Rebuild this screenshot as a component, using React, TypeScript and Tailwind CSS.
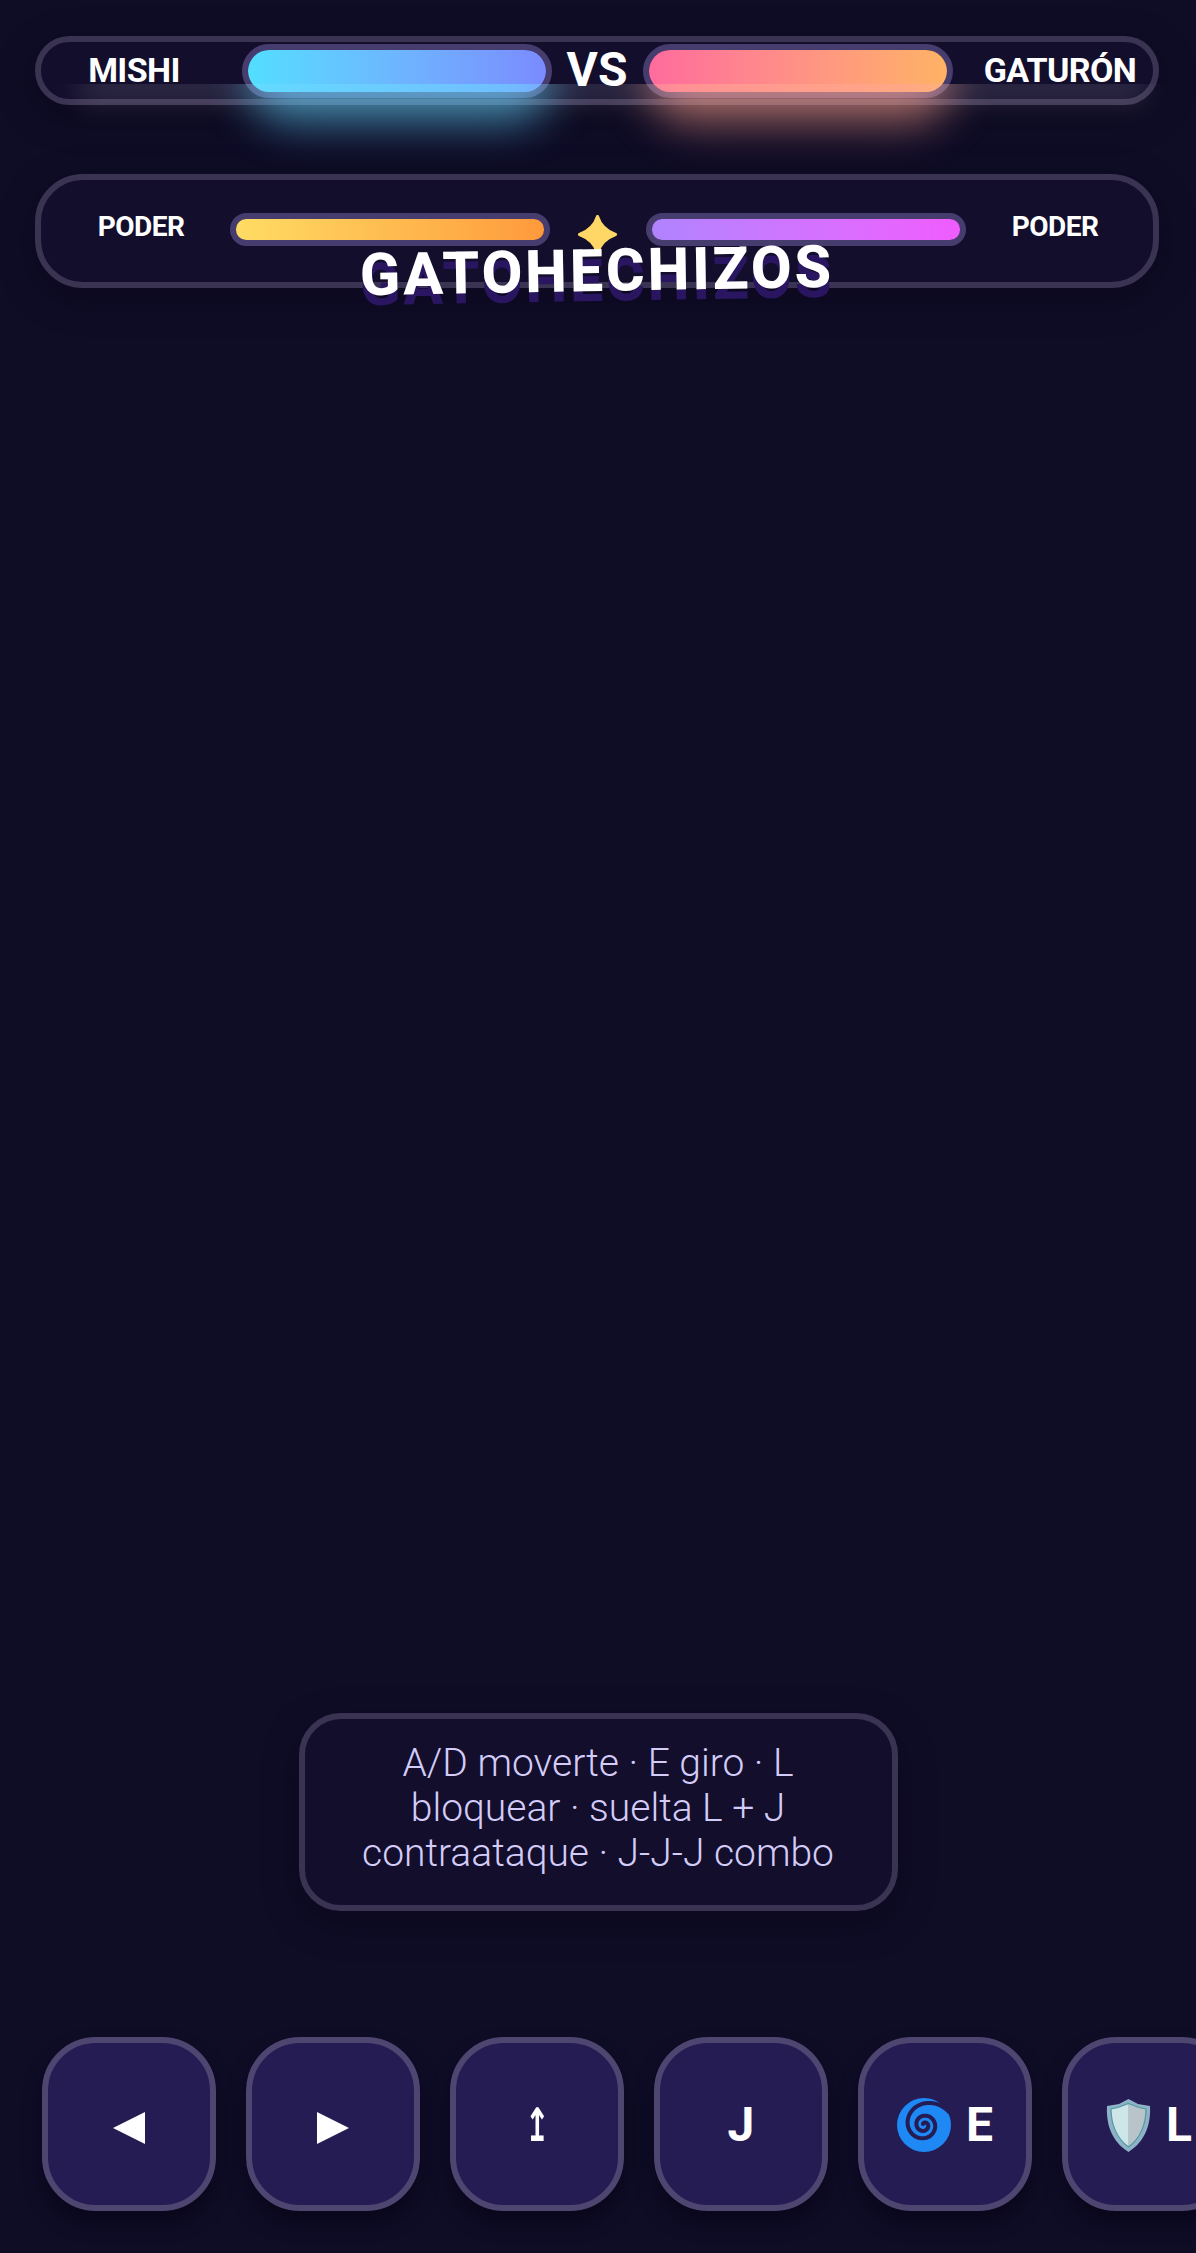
const font = { fontFamily: "Roboto, sans-serif" };

function spiralGap() {
  // dark gap between the arms of the cyclone, from the tail inwards
  const pts: string[] = [];
  for (let i = 0; i <= 120; i++) {
    const t = i / 120;
    const a = -0.45 - t * Math.PI * 4.6;
    const r = 1.5 + 16 * (1 - t) + 11 * Math.pow(1 - t, 9);
    pts.push(`${(27 + r * Math.cos(a)).toFixed(2)} ${(27 + r * Math.sin(a)).toFixed(2)}`);
  }
  return "M" + pts.join("L");
}

function Swirl() {
  return (
    <svg width="54" height="54" viewBox="0 0 54 54" className="shrink-0">
      <circle cx="27" cy="27" r="27" fill="#1e88f5" />
      <path d={spiralGap()} fill="none" stroke="#241c52" strokeWidth="4" strokeLinecap="round" />
    </svg>
  );
}

function Shield() {
  return (
    <svg width="45" height="53" viewBox="0 0 45 53" className="shrink-0">
      <path d="M22.5 0 L32 5 L44 7 C45 24 40 42 22.5 53 C5 42 0 24 1 7 L13 5 Z" fill="#8fb3c6" />
      <path d="M22.5 4.5 L12 8.5 L5 10 C5 24 10 39 22.5 48 Z" fill="#cfe6e8" />
      <path d="M22.5 4.5 L33 8.5 L40 10 C40 24 35 39 22.5 48 Z" fill="#b8c4ca" />
      <path d="M22.5 4.5 L33 8.5 L40 10 C40 24 35 39 22.5 48 C10 39 5 24 5 10 L12 8.5 Z" fill="none" stroke="#4f9aa3" strokeWidth="1.2" />
    </svg>
  );
}

function HealthBar({ fill }: { fill: string }) {
  return (
    <div className="h-[54px] w-[310px] shrink-0 rounded-full border-[6px] border-[#463d6e] bg-[#1c1640]">
      <div className={`h-full w-full rounded-[21px] ${fill}`} />
    </div>
  );
}

function PowerBar({ fill }: { fill: string }) {
  return (
    <div className="h-[33px] w-[320px] shrink-0 rounded-full border-[6px] border-[#463d6e] bg-[#1c1640]">
      <div className={`h-full w-full rounded-[10px] ${fill}`} />
    </div>
  );
}

function Key({ children }: { children: React.ReactNode }) {
  return (
    <div className="flex h-[174px] w-[174px] shrink-0 items-center justify-center gap-[15px] rounded-[54px] border-[6px] border-[#4e4670] bg-[#241c52] pt-[2px] text-[48px] font-bold text-white shadow-[0_12px_18px_rgba(6,4,20,0.55)]">
      {children}
    </div>
  );
}

export default function App() {
  return (
    <div className="relative flex h-[2253px] flex-col overflow-hidden bg-[#0f0c26] text-white" style={font}>
      <div className="pl-[35px] pr-[37px] pt-[36px]">
        <div className="flex h-[69px] items-center justify-between rounded-[35px] border-[6px] border-[#3a3352] bg-[#120e2c] shadow-[0_10px_36px_rgba(5,3,16,0.35)]">
          <span className="mb-[2px] w-[186px] text-center text-[34px] font-bold leading-none tracking-[-0.6px]">MISHI</span>
          <HealthBar fill="bg-linear-to-r from-[#52deff] to-[#7a8bff]" />
          <span className="mb-[2px] w-[62px] text-center text-[48px] font-bold leading-none">VS</span>
          <HealthBar fill="bg-linear-to-r from-[#ff6b9d] to-[#ffb264]" />
          <span className="mb-[2px] w-[186px] text-center text-[34px] font-bold leading-none tracking-[-0.6px]">GATURÓN</span>
        </div>

        <div className="relative mt-[69px]">
          <div className="flex h-[114px] items-start gap-[9px] rounded-[48px] border-[6px] border-[#3a3352] bg-[#120e2c] pl-[20px] pt-[33px] shadow-[0_10px_36px_rgba(5,3,16,0.35)]">
            <span className="w-[160px] text-center text-[28px] font-bold leading-[28px] tracking-[-0.5px]">PODER</span>
            <PowerBar fill="bg-linear-to-r from-[#ffdc64] to-[#ff9a3c]" />
            <div className="flex w-[78px] shrink-0 justify-center pr-[2px]">
              <svg width="39" height="39" viewBox="0 0 39 39" className="mt-[2px]">
                <path d="M19.5 1.5 C22.5 11 28 16 37.5 19.5 C28 23 22.5 28 19.5 37.5 C16.5 28 11 23 1.5 19.5 C11 16 16.5 11 19.5 1.5 Z" fill="#ffd766" stroke="#ffd766" strokeWidth="3" strokeLinejoin="round" />
              </svg>
            </div>
            <PowerBar fill="bg-linear-to-r from-[#b083ff] to-[#f05cff]" />
            <span className="w-[160px] text-center text-[28px] font-bold leading-[28px] tracking-[-0.5px]">PODER</span>
          </div>
          <h1 className="absolute left-0 right-0 top-[65px] -rotate-1 text-center text-[59px] font-extrabold leading-[64px] tracking-[3px] [text-shadow:0_10px_0_#2a1660]">
            GATOHECHIZOS
          </h1>
        </div>
      </div>

      <div className="mt-auto flex h-[198px] w-[599px] flex-col justify-center self-center rounded-[42px] border-[6px] border-[#3a3352] bg-[#120e2c] px-[30px] pb-[8px] text-center text-[39px] font-light leading-[45px] text-[#d4ccf8] shadow-[0_12px_36px_rgba(5,3,16,0.35)]">
        A/D moverte · E giro · L bloquear · suelta L + J contraataque · J-J-J combo
      </div>

      <div className="mt-[126px] flex gap-[30px] pb-[42px] pl-[42px]">
        <Key>
          <svg width="32" height="32" viewBox="0 0 32 32" className="mt-[6px]"><path d="M32 0 V32 L0 16 Z" fill="#fff" /></svg>
        </Key>
        <Key>
          <svg width="32" height="32" viewBox="0 0 32 32" className="mt-[6px]"><path d="M0 0 V32 L32 16 Z" fill="#fff" /></svg>
        </Key>
        <Key>
          <span className="inline-block scale-x-[0.65] font-['DejaVu_Sans'] text-[46px] font-bold">↥</span>
        </Key>
        <Key>J</Key>
        <Key>
          <Swirl />
          <span>E</span>
        </Key>
        <Key>
          <Shield />
          <span>L</span>
        </Key>
      </div>

      {/* glow layer: starts abruptly at y=84 and lies over the top bar */}
      <div className="pointer-events-none absolute left-0 right-0 top-[84px] h-[90px] overflow-hidden">
        <div className="absolute left-[80px] right-[50px] top-[-14px] h-[34px] bg-white/12 blur-[14px]" />
        <div className="absolute left-[250px] top-[-40px] h-[78px] w-[300px] rounded-full bg-[#60d6ff]/60 blur-[22px]" />
        <div className="absolute left-[650px] top-[-40px] h-[78px] w-[300px] rounded-full bg-[#ffa08a]/60 blur-[22px]" />
      </div>
    </div>
  );
}
